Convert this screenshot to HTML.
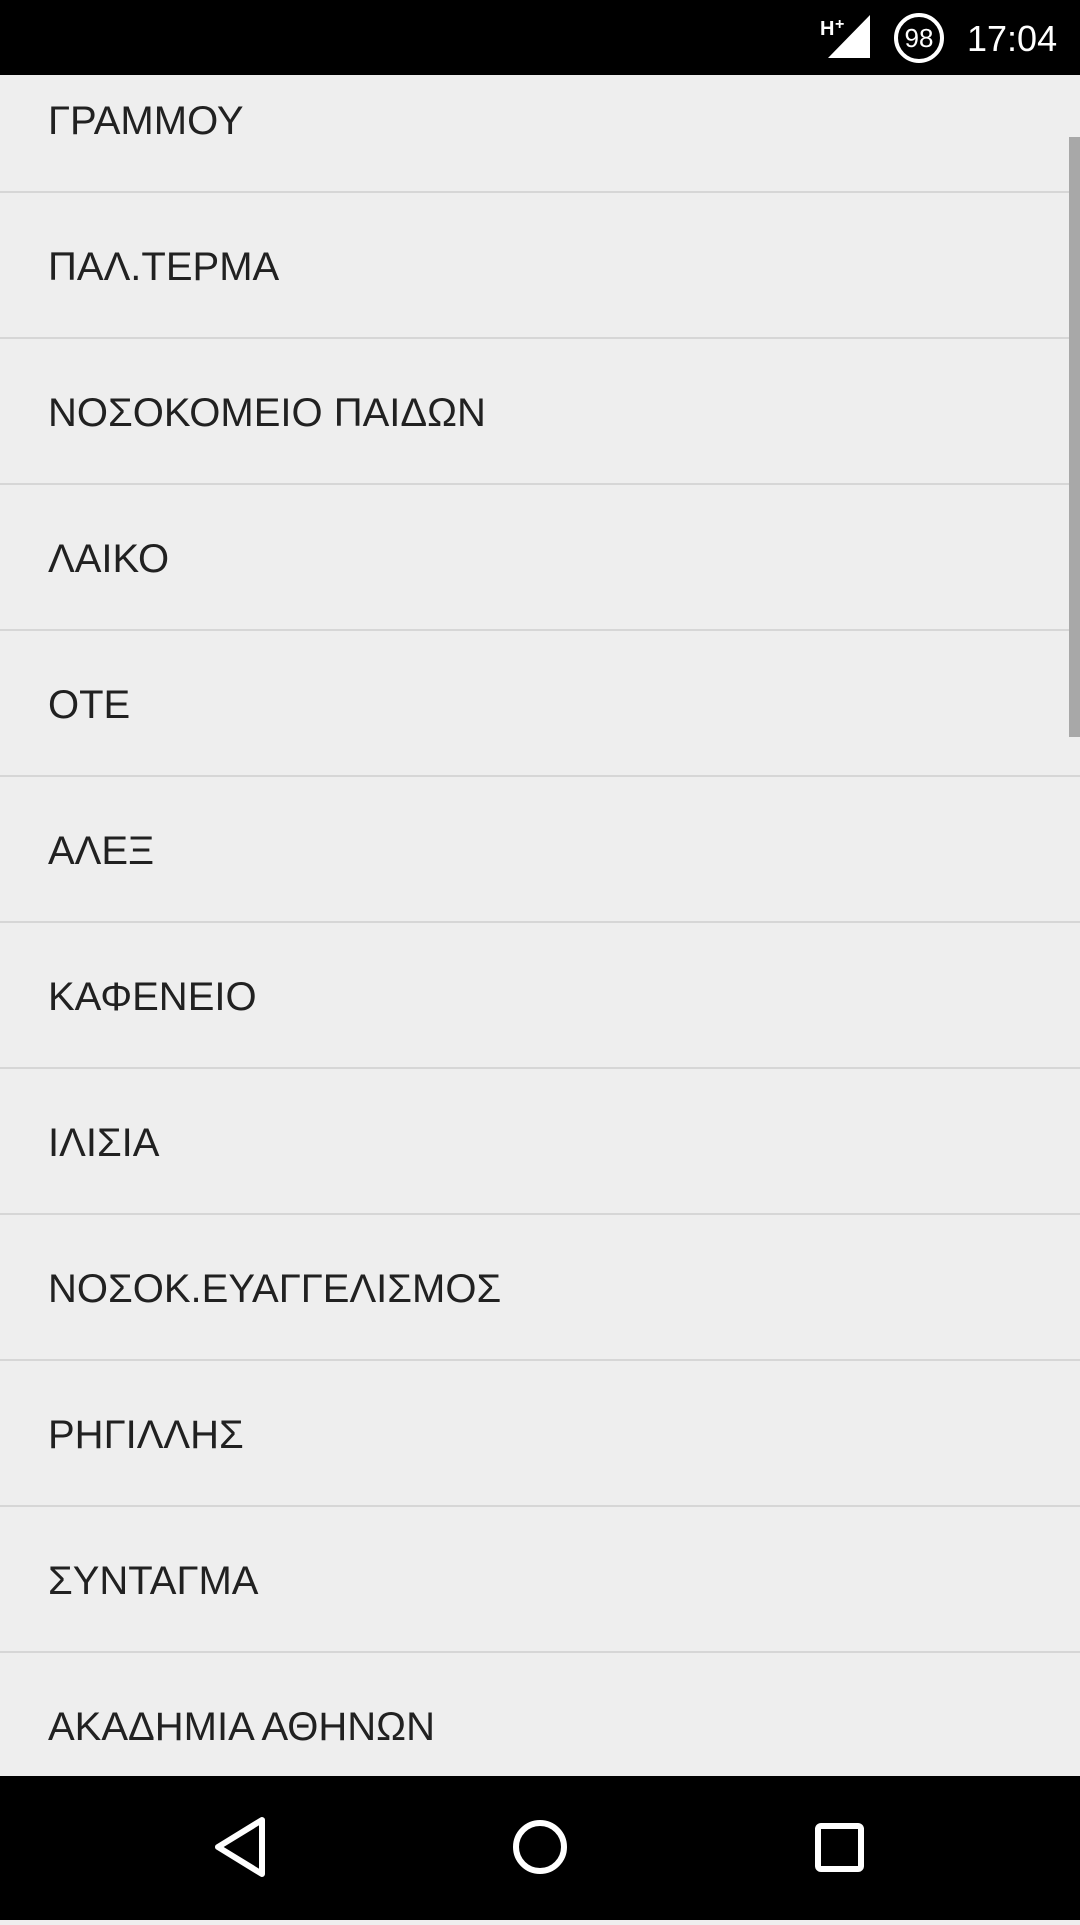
<!DOCTYPE html>
<html><head><meta charset="utf-8"><style>
*{margin:0;padding:0;box-sizing:border-box}
body{width:1080px;height:1920px;background:#eeeeee;position:relative;overflow:hidden;font-family:"Liberation Sans",sans-serif}
.sb{position:absolute;left:0;top:0;width:1080px;height:75px;background:#000;z-index:5}
.row{position:absolute;left:0;width:1080px;height:146px;border-bottom:2px solid #d6d6d6;display:flex;align-items:center;padding-left:48px;font-size:40px;color:#212121;padding-top:4px}
.scroll{position:absolute;right:0;top:137px;width:11px;height:600px;background:#a8a8a8}
.nav{position:absolute;left:0;top:1776px;width:1080px;height:144px;background:#000}
</style></head><body>
<div class="sb">
<svg width="1080" height="75" style="position:absolute;left:0;top:0">
<text x="820" y="35" fill="#fff" font-family="Liberation Sans" font-weight="bold" font-size="20">H</text>
<text x="835" y="29" fill="#fff" font-family="Liberation Sans" font-weight="bold" font-size="16">+</text>
<polygon points="870,15 870,58 828,58" fill="#fff"/>
<circle cx="919" cy="38" r="23" fill="none" stroke="#fff" stroke-width="4"/>
<text x="919" y="47" fill="#fff" text-anchor="middle" font-family="Liberation Sans" font-size="26">98</text>
<text x="967" y="51" fill="#fff" font-family="Liberation Sans" font-size="36">17:04</text>
</svg>
</div>
<div class="row" style="top:47px">ΓΡΑΜΜΟΥ</div>
<div class="row" style="top:193px">ΠΑΛ.ΤΕΡΜΑ</div>
<div class="row" style="top:339px">ΝΟΣΟΚΟΜΕΙΟ ΠΑΙΔΩΝ</div>
<div class="row" style="top:485px">ΛΑΙΚΟ</div>
<div class="row" style="top:631px">ΟΤΕ</div>
<div class="row" style="top:777px">ΑΛΕΞ</div>
<div class="row" style="top:923px">ΚΑΦΕΝΕΙΟ</div>
<div class="row" style="top:1069px">ΙΛΙΣΙΑ</div>
<div class="row" style="top:1215px">ΝΟΣΟΚ.ΕΥΑΓΓΕΛΙΣΜΟΣ</div>
<div class="row" style="top:1361px">ΡΗΓΙΛΛΗΣ</div>
<div class="row" style="top:1507px">ΣΥΝΤΑΓΜΑ</div>
<div class="row" style="top:1653px">ΑΚΑΔΗΜΙΑ ΑΘΗΝΩΝ</div>
<div class="scroll"></div>
<div class="nav">
<svg width="1080" height="144">
<polygon points="262,44 262,98 218,71" fill="none" stroke="#fff" stroke-width="6" stroke-linejoin="round"/>
<circle cx="540" cy="71" r="24" fill="none" stroke="#fff" stroke-width="6"/>
<rect x="818" y="50" width="43" height="43" rx="3" fill="none" stroke="#fff" stroke-width="6"/>
</svg>
</div>
</body></html>
